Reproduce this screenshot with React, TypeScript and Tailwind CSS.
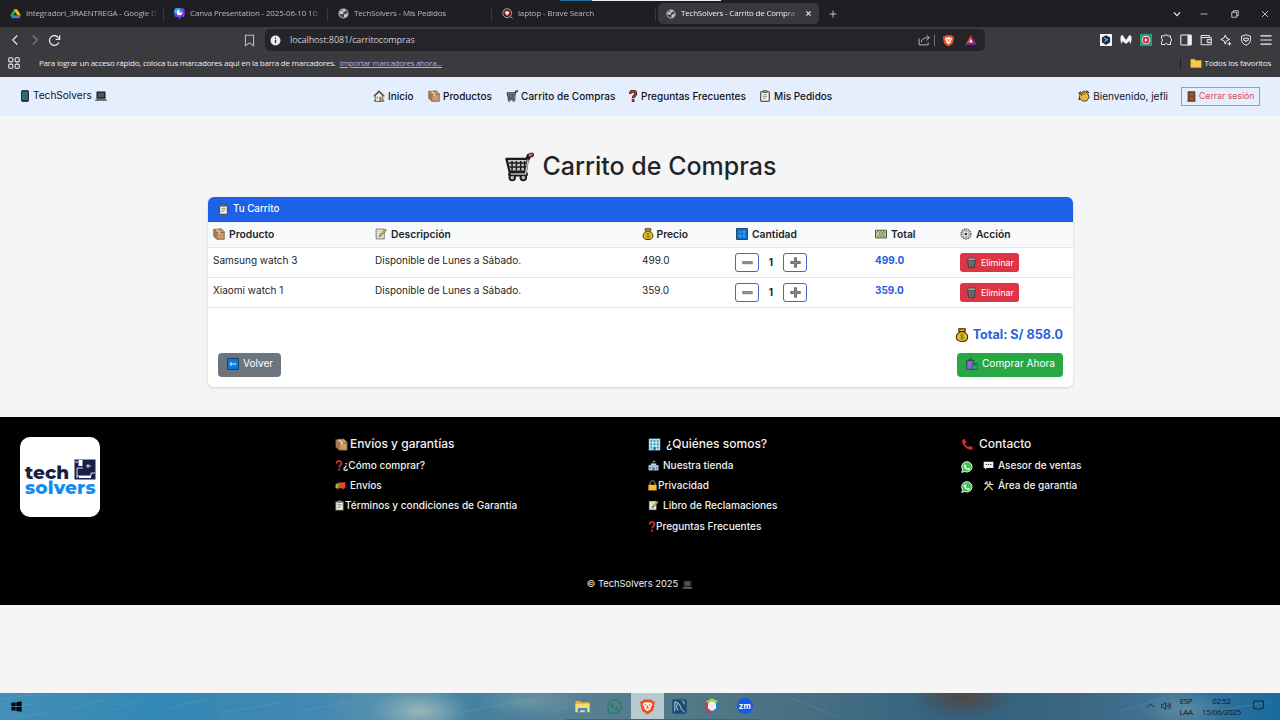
import React from "react";
import { FaWhatsapp } from "react-icons/fa";

type IconName = keyof typeof art;

const ink = "#1b1b1f";

const brave = (
  <>
    <path d="M4.5 1.5h7L13 3l1.2-.2.8 2-.7 1.4.2 1.3-1.6 4.8L8 15.5l-4.9-3.2L1.5 7.500l.2-1.300L1 4.800l.8-2L3 3z" fill="#f0501e" />
    <path d="M4.500 4.500 8 4l3.500.5 1 2-1.800 2.200.5 1.200L8 12.500 4.800 9.900l.5-1.200L3.500 6.500z" fill="#fff" />
    <path d="M5.300 6.200 7 7M10.700 6.200 9 7M8 7v2M6.600 9.700 8 9l1.400.7" stroke="#f0501e" strokeWidth="1" fill="none" />
  </>
);

const box = (
  <>
    <path d="M1 2 11 1l4 4v10H5L1 11z" fill="#c99a6b" stroke="#5b4030" strokeWidth=".9" />
    <path d="M1 2l4 4h10M5 6v9" fill="none" stroke="#7b583d" strokeWidth=".9" />
    <path d="M1.500 2.500 5 6v8.500L1.500 11z" fill="#a37850" />
    <path d="m6 1.500 3.500 4V8H7.500V6L4 1.700z" fill="#ecd0ad" />
  </>
);

const clipboard = (
  <>
    <rect x="2" y="2" width="12" height="13.300" rx="1" fill="#b9a892" stroke="#3c3833" />
    <rect x="3.700" y="3.700" width="8.600" height="10" fill="#f7f7f7" />
    <rect x="5" y=".7" width="6" height="3" rx="1" fill="#8c8c8c" stroke="#333" strokeWidth=".7" />
    <path d="M5.200 6.500h5.600M5.200 8.800h5.600M5.200 11h4" stroke="#767676" />
  </>
);

const cart = (
  <>
    <path d="m12 5 1.300-3 1.500-.5" fill="none" stroke={ink} strokeWidth="2.400" strokeLinecap="round" />
    <path d="m13.700 1.800 1-.4" fill="none" stroke="#e26a5a" strokeWidth="1.300" strokeLinecap="round" />
    <path d="M1.300 3.700h11.400l-1 6.800H3z" fill="#c9c9c9" stroke={ink} strokeWidth="1.200" strokeLinejoin="round" />
    <path d="M4.300 4.800v5M6.600 4.800v5M8.900 4.800v5M11 4.800v5M2.500 5.800h9.600M3 8h8.900" stroke={ink} strokeWidth=".8" />
    <path d="M3.500 11.800h8" fill="none" stroke={ink} strokeWidth="2.600" strokeLinecap="round" />
    <circle cx="4.400" cy="13.600" r="1.500" fill="#b4b4b4" stroke={ink} />
    <circle cx="10.300" cy="13.600" r="1.500" fill="#b4b4b4" stroke={ink} />
    <path d="M3.500 11.700h8L12.900 4" fill="none" stroke="#bdbdbd" strokeWidth=".8" />
  </>
);

const laptop = (
  <>
    <path d="M2.500 2.500h11v8.500h-11z" fill="#30343a" stroke="#17191c" />
    <path d="M4 4h8v5.500H4z" fill="#4d545c" />
    <path d="M2.300 11.500h11.400l2 2.500H.3z" fill="#77736d" stroke="#292827" strokeWidth=".6" />
  </>
);

const question = (
  <>
    <path d="M4.500 5.200C4.300 2.500 6 1.500 8 1.500s3.700 1.200 3.700 3.500C11.700 7.500 8.200 7.700 8.200 11" fill="none" stroke="#d93a28" strokeWidth="2.200" />
    <circle cx="8.200" cy="14" r="1.500" fill="#d93a28" />
  </>
);

const questionOutlined = (
  <>
    <path d="M4.500 5.200C4.300 2.500 6 1.700 8 1.700s3.700 1.200 3.700 3.300C11.700 7.500 8.200 7.700 8.200 11" fill="none" stroke="#251515" strokeWidth="3.800" />
    <circle cx="8.200" cy="14" r="2" fill="#251515" />
    <path d="M4.500 5.200C4.300 2.500 6 1.700 8 1.700s3.700 1.200 3.700 3.300C11.700 7.500 8.200 7.700 8.200 10.500" fill="none" stroke="#d93a28" strokeWidth="1.900" />
    <circle cx="8.200" cy="13.900" r="1.100" fill="#d93a28" />
  </>
);

const memo = (
  <>
    <path d="M1.500 1.500h10.800v13H1.500z" fill="#f5f3ec" stroke="#3b3b3b" strokeWidth=".9" />
    <path d="M3 4.500h6M3 7h5M3 9.500h4M3 12h7" stroke="#a5a5a5" strokeWidth=".8" />
    <path d="m5.800 11.500 1-2.800 6.700-7.200 1.700 1.600-6.700 7.200z" fill="#e6b52f" stroke="#4a3818" strokeWidth=".7" />
  </>
);

const bag = (
  <>
    <path d="M4.300 1h7.400v2.300L10.500 4.800c2.700 1.100 4 3.300 4 5.700 0 3.300-2.500 4.900-6.500 4.900s-6.500-1.600-6.500-4.900c0-2.400 1.300-4.600 4-5.700L4.300 3.300z" fill="#f0b71c" stroke="#302408" strokeWidth="1.200" />
    <path d="M5 4.100h6" stroke="#302408" strokeWidth="1.200" />
    <path d="M9.800 8c-1-1-3.400-.7-3.400.6 0 1.500 3.400.8 3.400 2.400 0 1.300-2.600 1.500-3.600.5M8 6.500v7" fill="none" stroke="#36862f" />
  </>
);

const globe = (
  <>
    <circle cx="8" cy="8" r="6.600" fill="#3a3d41" stroke="#bfc2c5" strokeWidth="1.500" />
    <path d="M2.500 6C4 4 6 5 7 3l1-1.500 3.500 1-1 2.500-3 .8L8 8l-2 1.500L2 8zM9 9l3.500-1 2 .5-2 4-2.500 1.700L8.500 12z" fill="#c6c9cb" />
  </>
);

const whatsapp = (
  <>
    <path d="M1 15.200 2 11.500A6.900 6.900 0 1 1 4.800 14z" fill="#3fc351" stroke="#f4fff5" strokeWidth="1.200" />
    <path d="M5.500 4.400 7 6.700l-.8 1C7 9 8 9.800 9.200 10.200l1-1 1.900 1.200c-.5 1.800-2 2-3.600 1.400C6.300 11 4.500 9 4.100 7c-.2-1.200.4-2.200 1.400-2.600z" fill="#fff" />
  </>
);

const art = {
  brave,
  box,
  clipboard,
  cart,
  laptop,
  question,
  questionOutlined,
  memo,
  bag,
  globe,
  whatsapp,
  drive: (
    <>
      <path d="M5.500 2h5l-7.800 13L.2 10.700z" fill="#23a35a" />
      <path d="M5.500 2h5l5.300 8.700h-5z" fill="#fbbd16" />
      <path d="M4.900 10.700h10.900L13.200 15H2.700z" fill="#3c7de6" />
      <path d="M10.800 10.700h5L13.200 15z" fill="#e6433a" />
    </>
  ),
  canva: (
    <>
      <rect x=".5" y=".5" width="15" height="12.500" rx="3" fill="#6f42e8" />
      <path d="M.5 4A3.500 3.500 0 0 1 4 .5h6L.5 9z" fill="#22bfdd" />
      <path d="M7 13h2v2.500H7z" fill="#9867ef" />
      <circle cx="8" cy="6.500" r="4" fill="#fff" />
      <path d="M8 6.500v-4a4 4 0 0 1 4 4z" fill="#5668eb" />
    </>
  ),
  search: (
    <>
      <circle cx="7.500" cy="7.500" r="6.500" fill="#2c2526" stroke="#d7a59a" strokeWidth="1.300" />
      <path d="M4.500 4h6l.8 2-1.300 4-2.500 1.800L5 10 3.700 6z" fill="#f05634" />
      <path d="m5.500 5.500 2-.5 2 .5.500 1.500-2.500 3-2.500-3z" fill="#fff" />
      <path d="m12.500 12.500 2.800 2.800" stroke="#d7a59a" strokeWidth="1.400" />
    </>
  ),
  phone: (
    <>
      <rect x="3.300" y=".6" width="9.400" height="14.800" rx="1.300" fill="#2c3439" stroke="#151a1e" />
      <rect x="4.800" y="2.500" width="6.400" height="10.500" fill="#1c8ea6" />
      <path d="M7 2.500V13M9.200 2.500V13M4.800 5h6.400M4.800 7.600h6.400M4.800 10.200h6.400" stroke="#245063" strokeWidth=".7" />
    </>
  ),
  house: (
    <>
      <path d="M3 7.500v7.700h10V7.500L8 3z" fill="#f4ede2" stroke="#3b3632" />
      <path d="m.8 8.500 7.200-7 7.200 7" fill="none" stroke="#514542" strokeWidth="1.700" />
      <path d="M8.500 9h2.800v6H8.500z" fill="#b4653e" />
      <path d="M4.500 9h2.500v2.500H4.500z" fill="#62b9dc" />
      <path d="M1 15.200c0-3 3-3 3 0zM12 15.200c0-3 3-3 3 0z" fill="#3d993f" />
    </>
  ),
  wave: (
    <>
      <path d="M2 7.500 4 4l4-2.800 5 3.300 1.800 5-2.800 4.700-5 .8-4.800-3.500z" fill="#eeb932" stroke="#302410" strokeWidth="1.100" />
      <path d="M5.500 8 3.300 5M7.500 6.500 5 3.500M9.500 5.500 7.500 2.500" stroke="#4a3510" strokeWidth="1.200" />
      <path d="M1 5.500 3.500 2M11 1l3.500 2.700M1 11l1 2.500" stroke="#27211a" strokeWidth="1.500" />
    </>
  ),
  door: (
    <>
      <path d="M3 1h10v14H3z" fill="#8f4b2b" stroke="#3b2720" />
      <path d="M5 3h6v4H5zM5 9h6v4H5z" fill="#a9623c" stroke="#67341e" strokeWidth=".6" />
      <path d="M1.500 15h13" stroke="#6c6969" strokeWidth="1.300" />
    </>
  ),
  numbers: (
    <>
      <path d="M.7.7h14.600v14.600H.7z" fill="#0b77d2" stroke="#173857" strokeWidth="1.200" />
      <path d="M5.500 4.500v2.300M9.300 4.700h2v1l-1.500 1.200h1.700M4.500 9.500h1.700l-.8 1 .8 1.200H4.500M9.500 9.500v1.300h1.800M11.200 9.500v2.300" fill="none" stroke="#a9d8f8" strokeWidth=".8" />
    </>
  ),
  back: (
    <>
      <path d="M.7.7h14.600v14.600H.7z" fill="#0b7be0" stroke="#123b60" strokeWidth="1.200" />
      <path d="M12.500 8H4M6.200 5.600 3.800 8l2.400 2.400" fill="none" stroke="#fff" strokeWidth="1.200" />
    </>
  ),
  cash: (
    <>
      <path d="M.6 3h14.800v10.200H.6z" fill="#d5e3a5" stroke="#35402b" strokeWidth="1.200" />
      <path d="M2.500 5h2.800v6H2.500zM6.500 5h3v6h-3zM10.700 5h2.700v6h-2.700z" fill="#f0f6c9" stroke="#53643b" strokeWidth=".8" />
      <path d="M8 5v6M12 5v6" stroke="#608445" strokeWidth=".9" />
    </>
  ),
  gear: (
    <>
      <circle cx="8" cy="8" r="6.600" fill="#e6e6e6" stroke="#45474a" strokeWidth="1.400" strokeDasharray="2.200 .8" />
      <circle cx="8" cy="8" r="4.400" fill="#f2f2f2" stroke="#66696c" strokeWidth=".8" />
      <circle cx="8" cy="8" r="1.700" fill="#303236" />
      <path d="M8 3.500V6M8 10v2.500M3.500 8H6M10 8h2.500" stroke="#77797c" strokeWidth=".7" />
    </>
  ),
  trash: (
    <>
      <path d="M2.500 3.500h11L12.300 15H3.700z" fill="#777c7e" stroke="#2d2f31" strokeWidth="1.100" />
      <ellipse cx="8" cy="3.300" rx="6.300" ry="2.100" fill="#a0a4a5" stroke="#303235" />
      <path d="m5.500 6 .4 7.500M8 6v7.500M10.500 6l-.4 7.500" stroke="#494c4f" strokeWidth=".9" />
    </>
  ),
  minus: <path d="M1 6.600h14v3.200H1z" fill="#999" stroke="#555" strokeWidth=".9" />,
  plus: <path d="M6.500 1h3v5.500H15v3H9.500V15h-3V9.500H1v-3h5.500z" fill="#8b8b8b" stroke="#464646" strokeWidth="1" />,
  shopping: (
    <>
      <path d="M1 3.500h3V1.300h4v2.200h2.300V15H1z" fill="#9065d4" stroke="#2a2340" strokeWidth=".9" />
      <path d="M8 7.300h7V15H8z" fill="#2aa187" stroke="#174b43" strokeWidth=".8" />
      <path d="M4 3.500h4M9.800 9h3.300" stroke="#262042" strokeWidth=".9" />
    </>
  ),
  truck: (
    <>
      <path d="M5.500 3.500H15v8.500H5.500z" fill="#e6472b" />
      <path d="M.8 7 3 4.800h2.500V12H.8z" fill="#b7bf4e" />
      <path d="M1.700 7.500 3.200 6h1v2H1.700z" fill="#4a84a2" />
      <circle cx="4" cy="12.300" r="1.500" fill="#a04b31" />
      <circle cx="12" cy="12.300" r="1.500" fill="#a04b31" />
    </>
  ),
  office: (
    <>
      <path d="M1 .8h14v14.400H1z" fill="#b9e4f4" />
      <path d="M3 2.500h2v2.300H3zM7 2.500h2v2.300H7zM11 2.500h2v2.300h-2zM3 6.500h2v2.300H3zM7 6.500h2v2.300H7zM11 6.500h2v2.300h-2zM3 10.500h2v2.300H3zM11 10.500h2v2.300h-2z" fill="#2996c9" />
      <path d="M6.500 11h3v4.200h-3z" fill="#2574a1" />
    </>
  ),
  store: (
    <>
      <path d="M4 5h8v3H4z" fill="#bbd9ec" />
      <path d="M7 1h3.500v2H8v2H7z" fill="#e3756a" />
      <path d="M.8 7.500h14.400V15H.8z" fill="#d6e3ee" />
      <path d="M1 8.500h14M2.500 11h2v2h-2zM11.500 11h2v2h-2z" fill="#4278a9" stroke="#5888b2" />
      <path d="M6.300 10.500h3.400V15H6.300z" fill="#496d95" />
    </>
  ),
  lock: (
    <>
      <path d="M4.300 8V5c0-5 7.400-5 7.400 0v3" fill="none" stroke="#c0a77a" strokeWidth="1.400" />
      <path d="M2 7h12v8.200H2z" fill="#f8bd33" />
    </>
  ),
  call: <path d="M1.500 2.500 4 1l2.500 4L5 7c.8 2 2 3.300 4 4l2-1.500L15 12l-1.500 2.500C8.500 15.500.5 9 1.500 2.500z" fill="#dc2e29" />,
  chat: (
    <>
      <path d="M1 2.500h14v9H5.500l-2.300 2.500v-2.500H1z" fill="#eff1f0" />
      <path d="M4 6.500h1.700M7.200 6.500h1.700M10.400 6.500h1.700" stroke="#333" strokeWidth="1.500" />
    </>
  ),
  tools: (
    <>
      <path d="m14 14.500-9-10" stroke="#e8a733" strokeWidth="2.200" />
      <path d="M1.500 5.500 5.500 1.500l2 1.500-4 4z" fill="#c9cdcf" />
      <path d="m2 14.500 9-10" stroke="#c9cdcf" strokeWidth="2" />
      <path d="M10 1.500v3.500l1.500 1.500H15" fill="none" stroke="#e1e3e4" strokeWidth="1.700" />
    </>
  ),
  chevLeft: <path d="m11 2-6 6 6 6" fill="none" stroke="currentColor" strokeWidth="1.500" />,
  chevRight: <path d="m5 2 6 6-6 6" fill="none" stroke="currentColor" strokeWidth="1.500" />,
  chevDown: <path d="m3 5.500 5 5 5-5" fill="none" stroke="currentColor" strokeWidth="1.900" />,
  chevUp: <path d="m2 11 6-6 6 6" fill="none" stroke="currentColor" strokeWidth="1.400" />,
  reload: (
    <>
      <path d="M13.300 10.500A6 6 0 1 1 13 5" fill="none" stroke="currentColor" strokeWidth="1.500" />
      <path d="M14.300 1.500v5H9.500" fill="none" stroke="currentColor" strokeWidth="1.500" />
    </>
  ),
  bookmark: <path d="M3 1.500h10v13L8 11l-5 3.500z" fill="none" stroke="currentColor" strokeWidth="1.300" />,
  info: (
    <>
      <circle cx="8" cy="8" r="7.200" fill="#ededf0" />
      <path d="M8 7v5M8 3.700v1.600" stroke="#29282d" strokeWidth="1.800" />
    </>
  ),
  apps: (
    <g fill="none" stroke="currentColor" strokeWidth="1.400">
      <rect x="1" y="1" width="5.500" height="5.500" rx="1.500" />
      <rect x="9.500" y="1" width="5.500" height="5.500" rx="1.500" />
      <rect x="1" y="9.500" width="5.500" height="5.500" rx="1.500" />
      <rect x="9.500" y="9.500" width="5.500" height="5.500" rx="1.500" />
    </g>
  ),
  share: (
    <g fill="none" stroke="currentColor" strokeWidth="1.200">
      <path d="M1.500 6v8.500h12V11" />
      <path d="M4.500 11c0-4 3-6 7.500-6h3M11.500 1.500 15 5l-3.500 3.500" />
    </g>
  ),
  bat: (
    <>
      <path d="M8 1 .5 14.500h5L8 10z" fill="#e94b25" />
      <path d="M8 1l7.500 13.500h-5L8 10z" fill="#9a2586" />
      <path d="M.5 14.500 4 11.300h8l3.500 3.200z" fill="#662d91" />
      <path d="m8 6.500 2.500 4.800h-5z" fill="#fff" />
    </>
  ),
  hex: (
    <>
      <rect width="16" height="16" rx="1" fill="#f6f7f9" />
      <path d="m8 1.500 5.500 3v6.500L8 14.500 2.500 11V4.500z" fill="#17304f" />
      <path d="m5.500 5.500 4.500 2-4 2.500" fill="none" stroke="#c6d3df" strokeWidth="1.200" />
    </>
  ),
  malware: <path d="M1 3c1-2 3-1.500 4 .5L8 8l3-4.500C12 1.500 14 1 15 3c1 3 .3 7-1 10-1-1-1.500-2-1.300-4L9 12.500H7L3.300 9c.2 2-.3 3-1.300 4C.7 10 0 6 1 3z" fill="#f3f3f4" />,
  ytblock: (
    <>
      <rect width="16" height="16" fill="#2c9b82" />
      <circle cx="8" cy="8" r="5.700" fill="#f4eeee" />
      <circle cx="8" cy="8" r="4.500" fill="#d8253c" />
      <path d="m6.500 5.500 4 2.500-4 2.500z" fill="#fff" />
    </>
  ),
  puzzle: <path d="M2 2.500h4c0-2 4-2 4 0h4V6c2 0 2 4 0 4v4h-4c0-2-3-2-3 0H2v-4c2 0 2-3.500 0-3.500z" fill="none" stroke="currentColor" strokeWidth="1.300" />,
  panel: (
    <>
      <rect x="1" y="1.300" width="14" height="13.400" rx="1" fill="none" stroke="currentColor" strokeWidth="1.400" />
      <path d="M10 1.300h5v13.400h-5z" fill="currentColor" />
    </>
  ),
  wallet: (
    <g fill="none" stroke="currentColor" strokeWidth="1.300">
      <path d="M1.500 5V2h11v2.500M1.500 4.700H15v9.600H1.500z" />
      <path d="M15 7.500H9.500v4H15M11.500 9.500h1" />
    </g>
  ),
  sparkle: (
    <g fill="none" stroke="currentColor" strokeWidth="1.300">
      <path d="m7 1.500 1.700 4L13 7.300 8.700 9 7 13.500 5.300 9 1 7.300l4.300-1.800z" />
      <path d="M12.500 10.500v5M10 13h5" />
    </g>
  ),
  shield: (
    <g fill="none" stroke="currentColor" strokeWidth="1.300">
      <path d="m8 1 6 2v4.500c0 4-2.500 6-6 7.500-3.500-1.500-6-3.500-6-7.500V3z" />
      <path d="M5 5.500h6v3H9l-1 2-1-2H5z" />
    </g>
  ),
  menu: <path d="M.5 2.500h15M.5 8h15M.5 13.500h15" stroke="currentColor" strokeWidth="1.500" />,
  folder: <path d="M1 3h5l1.500 1.700H15V14H1z" fill="#f9c846" stroke="#e2a92b" strokeWidth=".6" />,
  close: <path d="m2 2 12 12M14 2 2 14" stroke="currentColor" strokeWidth="1.500" />,
  closeBold: <path d="m3 3 10 10M13 3 3 13" stroke="currentColor" strokeWidth="2.400" />,
  minimize: <path d="M1 8h14" stroke="currentColor" strokeWidth="1.400" />,
  restore: (
    <g fill="none" stroke="currentColor" strokeWidth="1.500">
      <path d="M1.500 4.500h10v10h-10zM4.500 4V1.500h10v10H12" />
    </g>
  ),
  add: <path d="M8 1v14M1 8h14" stroke="currentColor" strokeWidth="1.500" />,
  windows: <path d="M.5 2.700 6.800 1.800v5.600H.5zM7.700 1.700 15.500.5v6.900H7.700zM.5 8.500h6.300v5.700L.5 13.300zM7.700 8.500h7.800v7l-7.800-1.100z" fill="#020509" />,
  explorer: (
    <>
      <path d="M.5 2h5l1 1.500h9V14H.5z" fill="#e9ac2c" />
      <path d="M.5 5h15v9H.5z" fill="#fadb70" />
      <path d="M3 9.500h10V15h-2.500v-3h-5v3H3z" fill="#3a8ccc" />
    </>
  ),
  mysql: (
    <>
      <rect x=".3" y=".3" width="15.400" height="15.400" rx="1.500" fill="#1d4d74" />
      <path d="M3 13V3c3.500 0 6 3.500 7 8l3.500 3M5.500 4.500 5 9.500l1.500 2.500M10.500 1.500l2 1.500.5 2.500" fill="none" stroke="#c8dae6" strokeWidth="1" />
    </>
  ),
  cube: (
    <>
      <path d="m8 .3 6.500 3.200L8 7 1.500 3.500z" fill="#a9cf53" />
      <path d="M1.500 3.500 8 7v8.700L1.500 12z" fill="#c73d4e" />
      <path d="M14.500 3.500 8 7v8.700l6.500-3.700z" fill="#3479b8" />
      <path d="m8 3.500 4 2v5L8 13l-4-2.500v-5z" fill="#f5f7f7" />
      <path d="m4 5.500 4 2 4-2M8 7.500V13" fill="none" stroke="#ccd2d5" strokeWidth=".7" />
    </>
  ),
  speaker: (
    <g fill="none" stroke="currentColor" strokeWidth="1.200">
      <path d="M1 5.500h3L7.500 2v12L4 10.500H1zM9.500 6c1 1 1 3 0 4M11.500 4c2 2 2 6 0 8M13.500 2.500c3 3 3 8 0 11" />
    </g>
  ),
  notice: <path d="M1 1.500h14v11h-5l-2 2.300-2-2.300H1z" fill="none" stroke="currentColor" strokeWidth="1.200" />,
};

function Icon({ name, className = "size-[12px]" }: { name: IconName; className?: string }) {
  return (
    <svg viewBox="0 0 16 16" preserveAspectRatio="xMidYMid slice" aria-hidden="true" className={`block shrink-0 ${className}`}>
      {art[name]}
    </svg>
  );
}

const tabs: { icon: IconName; title: string }[] = [
  { icon: "drive", title: "IntegradorI_3RAENTREGA - Google D" },
  { icon: "canva", title: "Canva Presentation - 2025-06-10 10:" },
  { icon: "globe", title: "TechSolvers - Mis Pedidos" },
  { icon: "search", title: "laptop - Brave Search" },
];

function BrowserChrome() {
  return (
    <header className="h-[77px] bg-[#3b3a3e] font-['Open_Sans','Noto_Sans',sans-serif] text-[8px] tracking-[-0.16px] text-[#eeeef0]">
      <div className="relative flex h-[27px] bg-[#1f1e23]">
        <div className="absolute left-[560px] top-0 flex h-px w-[161px]">
          <div className="w-[32px] bg-[#246c9f]" />
          <div className="flex-1 bg-[#e7f0ed]" />
        </div>
        {tabs.map((tab) => (
          <div key={tab.title} className="flex w-[164px] items-center pl-[10px]">
            <Icon name={tab.icon} className="size-[11px]" />
            <div className="mb-[2px] ml-[5px] w-[133px] whitespace-nowrap text-[#b9b9bd] [mask-image:linear-gradient(to_right,black_90%,transparent)]">{tab.title}</div>
            <div className="ml-auto h-[14px] w-px bg-[#37363b]" />
          </div>
        ))}
        <div className="ml-[2px] mt-[3px] flex h-[21px] w-[161px] items-center rounded-[5px] bg-[#39383d] pl-[8px] pr-[7px]">
          <Icon name="globe" className="size-[10px]" />
          <div className="mb-[2px] ml-[5px] w-[118px] whitespace-nowrap tracking-[-0.2px] [mask-image:linear-gradient(to_right,black_88%,transparent)]">TechSolvers - Carrito de Compra</div>
          <Icon name="closeBold" className="ml-auto size-[7px]" />
        </div>
        <Icon name="add" className="ml-[10px] mt-[10px] size-[8px]" />
        <div className="ml-auto flex items-center pr-[11px]">
          <Icon name="chevDown" className="mr-[18px] size-[10px]" />
          <Icon name="minimize" className="mr-[23px] size-[8px]" />
          <Icon name="restore" className="mr-[22px] size-[8px]" />
          <Icon name="close" className="size-[8px]" />
        </div>
      </div>
      <div className="flex h-[26px] items-center pl-[9px] pr-[8px]">
        <Icon name="chevLeft" className="size-[12px]" />
        <Icon name="chevRight" className="ml-[8px] size-[12px] text-[#838287]" />
        <Icon name="reload" className="ml-[7px] size-[13px]" />
        <Icon name="bookmark" className="ml-[182px] size-[13px] text-[#bbbbc0]" />
        <div className="ml-[9px] flex h-[22px] w-[720px] items-center rounded-[5px] bg-[#252429] pl-[5px] pr-[8px]">
          <Icon name="info" className="size-[11px]" />
          <span className="ml-[9px] text-[9px] tracking-[-0.120px] text-[#cdcdd1]">localhost:8081/carritocompras</span>
          <Icon name="share" className="ml-auto size-[12px] text-[#c2c2c5]" />
          <div className="ml-[4px] h-[11px] w-px bg-[#707075]" />
          <Icon name="brave" className="ml-[7px] size-[13px]" />
          <Icon name="bat" className="ml-[10px] size-[12px]" />
        </div>
        <div className="ml-auto flex items-center gap-[8px]">
          <Icon name="hex" />
          <Icon name="malware" />
          <Icon name="ytblock" />
          <Icon name="puzzle" />
          <Icon name="panel" />
          <Icon name="wallet" />
          <Icon name="sparkle" />
          <Icon name="shield" />
          <Icon name="menu" />
        </div>
      </div>
      <div className="flex h-[21px] items-center whitespace-nowrap pb-[1px] pl-[8px] pr-[9px]">
        <Icon name="apps" className="size-[12px]" />
        <span className="ml-[19px] tracking-[-0.235px]">Para lograr un acceso rápido, coloca tus marcadores aquí en la barra de marcadores.</span>
        <span className="ml-[4px] tracking-[-0.290px] text-[#b5aee8] underline">Importar marcadores ahora...</span>
        <div className="ml-auto h-[11px] w-px bg-[#1d1c20]" />
        <Icon name="folder" className="ml-[9px] size-[12px]" />
        <span className="ml-[3px] tracking-[-0.2px]">Todos los favoritos</span>
      </div>
    </header>
  );
}

function NavLink({ icon, children, className = "" }: { icon: IconName; children: string; className?: string }) {
  return (
    <a className={`flex items-center gap-[3px] whitespace-nowrap ${className}`}>
      <Icon name={icon} />
      {children}
    </a>
  );
}

function Navbar() {
  return (
    <nav className="flex h-[39px] items-center bg-[#e5eefd] pb-px pl-[19px] pr-[20px] text-[10px] font-medium text-[#111216]">
      <div className="flex w-[354px] items-center text-[10.100px] font-normal">
        <Icon name="phone" />
        <span className="ml-[2px] mr-[3px]">TechSolvers</span>
        <Icon name="laptop" />
      </div>
      <NavLink icon="house" className="w-[55px]">Inicio</NavLink>
      <NavLink icon="box" className="w-[78px]">Productos</NavLink>
      <NavLink icon="cart" className="w-[121px] tracking-[0.050px]">Carrito de Compras</NavLink>
      <NavLink icon="questionOutlined" className="w-[132px] !gap-[2px]">Preguntas Frecuentes</NavLink>
      <NavLink icon="clipboard">Mis Pedidos</NavLink>
      <div className="ml-auto flex items-center gap-[3px] text-[10px] font-normal">
        <Icon name="wave" />
        Bienvenido, jefli
      </div>
      <button className="ml-[13px] mt-px flex h-[19px] w-[79px] items-center gap-[2px] whitespace-nowrap border border-[#dc8294] pl-[4px] text-[8.700px] font-normal text-[#d5485e]">
        <Icon name="door" className="size-[11px]" />
        Cerrar sesión
      </button>
    </nav>
  );
}

const columns: { icon: IconName; label: string; cell: string }[] = [
  { icon: "box", label: "Producto", cell: "w-[162px]" },
  { icon: "memo", label: "Descripción", cell: "w-[267px]" },
  { icon: "bag", label: "Precio", cell: "w-[94px]" },
  { icon: "numbers", label: "Cantidad", cell: "w-[139px]" },
  { icon: "cash", label: "Total", cell: "w-[85px]" },
  { icon: "gear", label: "Acción", cell: "w-[118px]" },
];

const items = [
  { name: "Samsung watch 3", price: "499.0" },
  { name: "Xiaomi watch 1", price: "359.0" },
];

function Stepper() {
  const button = "flex h-[19px] w-[24px] items-center justify-center rounded-[3px] border border-[#376bc4] bg-white";
  return (
    <div className="flex items-center">
      <button className={button}><Icon name="minus" className="size-[11px]" /></button>
      <span className="w-[24px] text-center text-[10px] font-bold">1</span>
      <button className={button}><Icon name="plus" className="size-[11px]" /></button>
    </div>
  );
}

function CartCard() {
  return (
    <section className="ml-[208px] mt-[15px] h-[190px] w-[865px] overflow-hidden rounded-[6px] bg-white text-[10px] text-[#212529] shadow-[0_1px_3px_rgba(0,0,0,0.14)]">
      <div className="flex h-[25px] items-center gap-[4px] border-b border-[#1c55c8] bg-[#1c61e7] pl-[10px] text-[9.800px] font-medium text-white">
        <Icon name="clipboard" className="size-[11px]" />
        Tu Carrito
      </div>
      <table className="w-full table-fixed border-collapse">
        <thead>
          <tr className="h-[25px] border-b border-[#e4e6e9] bg-[#f8f9fb] text-left">
            {columns.map((c) => (
              <th key={c.label} className={`${c.cell} p-0 pl-[5px] align-middle text-[10.300px] font-semibold`}>
                <div className={`flex items-center ${c.icon === "bag" ? "gap-[2.500px]" : "gap-[4px]"}`}>
                  <Icon name={c.icon} className="size-[12px]" />
                  {c.label}
                </div>
              </th>
            ))}
          </tr>
        </thead>
        <tbody>
          {items.map((item) => (
            <tr key={item.name} className="h-[30px] border-b border-[#e4e6e9] align-top leading-[15px]">
              <td className="p-0 pl-[5px] pt-[5px]">{item.name}</td>
              <td className="p-0 pl-[5px] pt-[5px]">Disponible de Lunes a Sábado.</td>
              <td className="p-0 pl-[5px] pt-[5px]">{item.price}</td>
              <td className="p-0 pl-[4px] pt-[5px]"><Stepper /></td>
              <td className="p-0 pl-[5px] pt-[5px] font-bold text-[#2360df]">{item.price}</td>
              <td className="p-0 pl-[5px] pt-[5px]">
                <button className="flex h-[19px] w-[59px] items-center gap-[4px] rounded-[3px] bg-[#dc3545] pl-[6px] text-[8.800px] text-white">
                  <Icon name="trash" className="size-[11px]" />
                  Eliminar
                </button>
              </td>
            </tr>
          ))}
        </tbody>
      </table>
      <div className="px-[10px] pt-[19px]">
        <div className="flex h-[17px] items-center justify-end gap-[4px] text-[12.600px] font-bold text-[#2b63da]">
          <Icon name="bag" className="size-[14px]" />
          Total: S/ 858.0
        </div>
        <div className="mt-[9px] flex justify-between text-[10.100px] text-white">
          <button className="flex h-[24px] w-[63px] items-center gap-[4px] rounded-[4px] bg-[#6c757d] pb-px pl-[9px]">
            <Icon name="back" />
            Volver
          </button>
          <button className="flex h-[24px] w-[106px] items-center gap-[4px] whitespace-nowrap rounded-[4px] bg-[#28a745] pb-px pl-[9px]">
            <Icon name="shopping" />
            Comprar Ahora
          </button>
        </div>
      </div>
    </section>
  );
}

type FooterItem = { icon: IconName; label: string; gap?: string };

function footerIconSize(icon: IconName) {
  if (icon === "question") return "h-[11px] w-[8px]";
  if (icon === "lock" || icon === "clipboard") return "h-[11px] w-[9px]";
  return "size-[11px]";
}

function FooterColumn({ heading, links }: { heading: FooterItem; links: FooterItem[] }) {
  return (
    <div className="w-[313px] text-[10.050px] font-medium">
      <h2 className={`flex h-[20px] items-center text-[12px] ${heading.gap ?? "gap-[5px]"}`}>
        <Icon name={heading.icon} className="size-[13px]" />
        {heading.label}
      </h2>
      <ul className="pt-[1.500px]">
        {links.map((l) => (
          <li key={l.label} className={`flex h-[20.200px] items-center whitespace-nowrap ${l.gap ?? "gap-[4px]"}`}>
            <Icon name={l.icon} className={footerIconSize(l.icon)} />
            {l.label}
          </li>
        ))}
      </ul>
    </div>
  );
}

function Logo() {
  return (
    <div className="flex size-[80px] flex-col justify-center rounded-[10px] bg-white pl-[5px] font-['Montserrat','Inter',sans-serif] font-extrabold">
      <div className="flex h-[21px] items-end">
        <span className="w-[49px] text-[18.500px] leading-[15px] tracking-[0.100px] text-[#19203f]">tech</span>
        <svg viewBox="0 0 22 21" className="h-[21px] w-[22px] shrink-0" aria-hidden="true">
          <path d="M.5.5h21v20H.5z" fill="#18204a" />
          <path d="M4.500 1h4v6h-4z" fill="#fff" />
          <path d="M1 3h3M9 9H3v10M3 17h14v-3h4M14 5v4M12 7h5" fill="none" stroke="#dce5ed" strokeWidth="1" />
          <path d="M5 17h12v2H5z" fill="#fff" />
        </svg>
      </div>
      <span className="text-[18.500px] leading-[15px] tracking-[0.150px] text-[#128cf5]">solvers</span>
    </div>
  );
}

function Footer() {
  return (
    <footer className="mt-[30px] h-[188px] bg-black pt-[17px] text-[#f1f1f1]">
      <div className="flex h-[141px] pl-[20px]">
        <div className="w-[315px] shrink-0 pt-[3px]"><Logo /></div>
        <FooterColumn
          heading={{ icon: "box", label: "Envíos y garantías", gap: "gap-[2px]" }}
          links={[
            { icon: "question", label: "¿Cómo comprar?", gap: "gap-0" },
            { icon: "truck", label: "Envíos" },
            { icon: "clipboard", label: "Términos y condiciones de Garantía", gap: "gap-[1px]" },
          ]}
        />
        <FooterColumn
          heading={{ icon: "office", label: "¿Quiénes somos?" }}
          links={[
            { icon: "store", label: "Nuestra tienda" },
            { icon: "lock", label: "Privacidad", gap: "gap-[1px]" },
            { icon: "memo", label: "Libro de Reclamaciones" },
            { icon: "question", label: "Preguntas Frecuentes", gap: "gap-0" },
          ]}
        />
        <div className="text-[10.050px] font-medium">
          <h2 className="flex h-[20px] items-center gap-[5px] text-[12px]">
            <Icon name="call" className="size-[13px]" />
            Contacto
          </h2>
          <ul className="pt-[1.500px]">
            <li className="flex h-[20.200px] items-center">
              <Icon name="whatsapp" className="mr-[10px] mt-[2px] size-[12px]" />
              <Icon name="chat" className="mr-[4px] size-[11px]" />
              Asesor de ventas
            </li>
            <li className="flex h-[20.200px] items-center">
              <Icon name="whatsapp" className="mr-[10px] mt-[2px] size-[12px]" />
              <Icon name="tools" className="mr-[4px] size-[11px]" />
              Área de garantía
            </li>
          </ul>
        </div>
      </div>
      <p className="flex h-[19px] items-center justify-center gap-[4px] text-[9.400px]">
        © TechSolvers 2025
        <Icon name="laptop" className="size-[11px]" />
      </p>
    </footer>
  );
}

function Taskbar() {
  const slot = "flex w-[32.500px] items-center justify-center";
  return (
    <div className="relative flex h-[27px] overflow-hidden bg-[linear-gradient(90deg,#438fb7_0%,#3388b5_12%,#4388b2_25%,#5590ae_29%,#43819f_37%,#587f92_46%,#507785_56%,#416b83_67%,#32617f_75%,#3d6680_84%,#3f7496_91%,#196b9e_100%)] text-[#101820]">
      <svg viewBox="0 0 1280 27" preserveAspectRatio="none" className="absolute inset-0 h-full w-full" aria-hidden="true">
        <defs>
          <radialGradient id="foam">
            <stop offset="0" stopColor="#b3c6bb" stopOpacity=".75" />
            <stop offset="1" stopColor="#a9c4c4" stopOpacity="0" />
          </radialGradient>
          <radialGradient id="rock">
            <stop offset="0" stopColor="#54443a" stopOpacity=".85" />
            <stop offset="1" stopColor="#54443a" stopOpacity="0" />
          </radialGradient>
        </defs>
        <ellipse cx="420" cy="18" rx="50" ry="24" fill="url(#foam)" />
        <ellipse cx="530" cy="8" rx="55" ry="16" fill="url(#foam)" opacity=".4" />
        <ellipse cx="962" cy="4" rx="52" ry="22" fill="url(#rock)" />
        <ellipse cx="1185" cy="16" rx="45" ry="20" fill="url(#foam)" opacity=".4" />
        <g fill="none" stroke="#b4d8e2" strokeOpacity=".13">
          <path d="m0 6 32-4M5 14l28-3M15 24l35-4M70 17l40-12M105 20l38-13M170 15l35-9M220 20l60-10M300 18l50-9M460 20l60-12M540 24l40-14M790 5l50 19M1120 18l45-13M1220 17l50-8" />
        </g>
      </svg>
      <div className="relative flex w-full items-center">
        <Icon name="windows" className="ml-[11px] size-[11px]" />
        <div className="ml-[544px] flex h-full">
          <div className={`${slot} border-b border-[#1470b5]`}><Icon name="explorer" className="size-[15px]" /></div>
          <div className={`${slot} border-b border-[#1470b5]`}><FaWhatsapp className="size-[17px] text-[#198064]" /></div>
          <div className={`${slot} border-b border-[#1470b5] bg-[#b9c9d0]`}><Icon name="brave" className="size-[17px]" /></div>
          <div className={`${slot} border-b border-[#1470b5]`}><Icon name="mysql" className="size-[15px]" /></div>
          <div className={`${slot} border-b border-[#1470b5]`}><Icon name="cube" className="size-[16px]" /></div>
          <div className={`${slot} border-b border-[#1470b5]`}>
            <span className="flex size-[16px] items-center justify-center rounded-full bg-[#1458e7] pb-px text-[8px] font-bold text-white">zm</span>
          </div>
        </div>
        <div className="ml-auto flex items-center pb-[2px] pr-[16px] font-['Open_Sans','Noto_Sans',sans-serif] text-[8px] leading-[11px] tracking-[-0.370px]">
          <Icon name="chevUp" className="size-[9px]" />
          <Icon name="speaker" className="ml-[6px] size-[10px]" />
          <div className="ml-[7px] w-[16px] text-center">ESP<br />LAA</div>
          <div className="ml-[7px] w-[41px] text-center">02:52<br />15/06/2025</div>
          <Icon name="notice" className="ml-[11px] size-[11px]" />
        </div>
      </div>
    </div>
  );
}

export default function App() {
  return (
    <div className="flex h-[720px] w-[1280px] flex-col overflow-hidden bg-[#f5f5f5] font-['Inter',sans-serif]">
      <BrowserChrome />
      <Navbar />
      <main className="flex-1">
        <h1 className="mt-[35px] flex h-[31px] items-center justify-center gap-[9px] whitespace-nowrap text-[25px] font-medium text-[#212529]">
          <Icon name="cart" className="size-[30px]" />
          Carrito de Compras
        </h1>
        <CartCard />
        <Footer />
      </main>
      <Taskbar />
    </div>
  );
}
